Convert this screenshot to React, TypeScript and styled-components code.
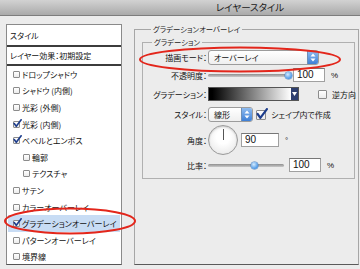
import React from "react";
import styled, { createGlobalStyle } from "styled-components";

const Global = createGlobalStyle`
  html, body { margin: 0; padding: 0; background: #ececec; }
  #root { width: 360px; height: 269px; }
`;

const JP = `"Noto Sans CJK JP", "Noto Sans", sans-serif`;
const NUM = `"Liberation Sans", Arial, sans-serif`;

const Window = styled.div`
  position: relative;
  width: 360px;
  height: 269px;
  overflow: hidden;
  background: #ececec;
  font-family: ${JP};
  font-feature-settings: "palt";
  color: #111;
  display: flex;
  flex-direction: column;
`;

const TitleBar = styled.div`
  height: 16px;
  flex: none;
  box-sizing: border-box;
  padding-left: 140px;
  background: linear-gradient(#d2d2d2, #aaaaaa);
  border-bottom: 1px solid #7d7d7d;
  font-size: 9.5px;
  line-height: 15px;
  text-align: center;
  color: #1a1a1a;
`;

const Body = styled.div`
  flex: 1;
  display: flex;
  align-items: stretch;
  padding: 8px 0 4px 6px;
  min-height: 0;
`;

const Sidebar = styled.div`
  width: 116px;
  flex: none;
  box-sizing: border-box;
  background: #fff;
  border: 1px solid #8a8a8a;
  border-bottom-color: #555;
  display: flex;
  flex-direction: column;
`;

const SideHeader = styled.div<{ $h: number }>`
  height: ${(p) => p.$h}px;
  flex: none;
  display: flex;
  align-items: center;
  padding-left: 3px;
  font-size: 8px;
  border-bottom: 2px solid #3c3c3c;
`;

const Item = styled.div<{ $indent?: boolean; $active?: boolean }>`
  height: 16.6px;
  flex: none;
  display: flex;
  align-items: center;
  gap: 2px;
  margin: 0 1px;
  padding-left: ${(p) => (p.$indent ? 15 : 5)}px;
  background: ${(p) => (p.$active ? "#c8dcf4" : "transparent")};
  font-size: 8px;
  white-space: nowrap;
`;

const Box = styled.span<{ $size: number }>`
  width: ${(p) => p.$size}px;
  height: ${(p) => p.$size}px;
  flex: none;
  position: relative;
  border: 1px solid #8c8c8c;
  background: linear-gradient(#ffffff, #ececec);
  border-radius: 1px;
  display: inline-block;
  svg {
    position: absolute;
    left: -1px;
    top: -3px;
  }
`;

const Check = ({ on, size = 5 }: { on?: boolean; size?: number }) => (
  <Box $size={size}>
    {on && (
      <svg width={size + 4} height={size + 4} viewBox="0 0 11 11">
        <path d="M1.5 5.5 L4 9 L10 1" fill="none" stroke="#1d3d8c" strokeWidth="2" strokeLinecap="round" strokeLinejoin="round" />
      </svg>
    )}
  </Box>
);

const Main = styled.div`
  flex: 1;
  display: flex;
  flex-direction: column;
  padding: 0 1px 0 12px;
  min-width: 0;
`;

const Outer = styled.fieldset`
  flex: 1;
  margin: 0;
  padding: 0 3px 0 7px;
  border: 1px solid #a6a6a6;
  border-bottom-color: #5a5a5a;
  min-width: 0;
`;

const Inner = styled.fieldset`
  margin: 3px 0 0 0;
  padding: 1px 4px 3px 0;
  border: 1px solid #b0b0b0;
  min-width: 0;
`;

const Legend = styled.legend`
  padding: 0 2px;
  margin-left: 9px;
  font-size: 7.4px;
  line-height: 10px;
  color: #1a1a1a;
`;

const Rows = styled.div`
  display: grid;
  grid-template-columns: 65px 1fr;
  grid-template-rows: 18px 18px 20px 21px 30px 20px;
  align-items: center;
`;

const Label = styled.div`
  font-size: 8px;
  text-align: right;
  white-space: nowrap;
  padding-right: 1px;
`;

const Line = styled.div`
  display: flex;
  align-items: center;
  gap: 3px;
`;

const Select = styled.div<{ $w: number }>`
  width: ${(p) => p.$w}px;
  height: 15px;
  box-sizing: border-box;
  border: 1px solid #9c9c9c;
  border-radius: 3px;
  background: linear-gradient(#ffffff, #efefef);
  display: flex;
  align-items: center;
  justify-content: space-between;
  padding-left: 5px;
  font-size: 8px;
  overflow: hidden;
`;

const Stepper = styled.span`
  width: 10px;
  height: 13px;
  flex: none;
  background: linear-gradient(#8fbcf0, #3d7fd6);
  border-left: 1px solid #6d8fb8;
  display: flex;
  align-items: center;
  justify-content: center;
`;

const Arrows = () => (
  <svg width="6" height="9" viewBox="0 0 6 9">
    <path d="M3 0.5 L5.5 3.5 H0.5 Z M3 8.5 L5.5 5.5 H0.5 Z" fill="#fff" />
  </svg>
);

const Track = styled.div<{ $w: number }>`
  position: relative;
  width: ${(p) => p.$w}px;
  height: 3px;
  border-radius: 2px;
  background: linear-gradient(#8f8f8f, #c9c9c9);
  margin-right: 2px;
`;

const Thumb = styled.span`
  position: absolute;
  top: -2px;
  width: 7px;
  height: 7px;
  margin-left: -3.5px;
  border-radius: 50%;
  background: radial-gradient(circle at 40% 35%, #d6ecff, #4b97e6 70%);
  box-shadow: 0 0 0 0.5px #4a7dbd;
`;

const Field = styled.div<{ $w: number }>`
  width: ${(p) => p.$w}px;
  height: 14px;
  box-sizing: border-box;
  background: #fff;
  border: 1px solid #a0a0a0;
  border-top-color: #777;
  font-family: ${NUM};
  font-size: 10px;
  line-height: 12px;
  padding-left: 3px;
`;

const Unit = styled.span`
  font-family: ${NUM};
  font-size: 8px;
  margin-left: 3px;
`;

const Swatch = styled.div`
  width: 91px;
  height: 14px;
  box-sizing: border-box;
  border: 1px solid #555;
  display: flex;
`;

const Ramp = styled.div`
  flex: 1;
  background: linear-gradient(to right, #000 4%, #fff 100%);
`;

const RampBtn = styled.span`
  width: 7px;
  background: #2e3f70;
  display: flex;
  align-items: center;
  justify-content: center;
`;

const Spacer = styled.span<{ $w: number }>`
  width: ${(p) => p.$w}px;
  flex: none;
`;

const Dial = styled.div`
  position: relative;
  width: 30px;
  height: 30px;
  box-sizing: border-box;
  border-radius: 50%;
  border: 1px solid #9a9a9a;
  background: radial-gradient(circle at 50% 40%, #ffffff 30%, #e2e2e2 100%);
  box-shadow: inset 0 1px 2px rgba(0, 0, 0, 0.2);
`;

const Needle = styled.span`
  position: absolute;
  left: 14px;
  top: 3px;
  width: 1px;
  height: 11px;
  background: #555;
`;

const Overlay = styled.svg`
  position: absolute;
  left: 0;
  top: 0;
  pointer-events: none;
`;

const CheckText = styled.span`
  font-size: 8px;
  margin-left: 2px;
  white-space: nowrap;
`;

const items: { t: string; on?: boolean; indent?: boolean; active?: boolean }[] = [
  { t: "ドロップシャドウ" },
  { t: "シャドウ (内側)" },
  { t: "光彩 (外側)" },
  { t: "光彩 (内側)", on: true },
  { t: "ベベルとエンボス", on: true },
  { t: "輪郭", indent: true },
  { t: "テクスチャ", indent: true },
  { t: "サテン" },
  { t: "カラーオーバーレイ" },
  { t: "グラデーションオーバーレイ", on: true, active: true },
  { t: "パターンオーバーレイ" },
  { t: "境界線" },
];

export default function App() {
  return (
    <Window>
      <Global />
      <TitleBar>レイヤースタイル</TitleBar>
      <Body>
        <Sidebar>
          <SideHeader $h={20}>スタイル</SideHeader>
          <SideHeader $h={17}>レイヤー効果：初期設定</SideHeader>
          {items.map((it) => (
            <Item key={it.t} $indent={it.indent} $active={it.active}>
              <Check on={it.on} />
              <span>{it.t}</span>
            </Item>
          ))}
        </Sidebar>
        <Main>
          <Outer>
            <Legend>グラデーションオーバーレイ</Legend>
            <Inner>
              <Legend>グラデーション</Legend>
              <Rows>
                <Label>描画モード：</Label>
                <Line>
                  <Select $w={111}>
                    オーバーレイ
                    <Stepper>
                      <Arrows />
                    </Stepper>
                  </Select>
                </Line>
                <Label>不透明度：</Label>
                <Line>
                  <Track $w={80}>
                    <Thumb style={{ left: "100%" }} />
                  </Track>
                  <Field $w={32}>100</Field>
                  <Unit>%</Unit>
                </Line>
                <Label>グラデーション：</Label>
                <Line>
                  <Swatch>
                    <Ramp />
                    <RampBtn>
                      <svg width="5" height="4" viewBox="0 0 5 4">
                        <path d="M0 0 H5 L2.5 4 Z" fill="#fff" />
                      </svg>
                    </RampBtn>
                  </Swatch>
                  <Spacer $w={13} />
                  <Check size={7} />
                  <CheckText>逆方向</CheckText>
                </Line>
                <Label>スタイル：</Label>
                <Line>
                  <Select $w={45}>
                    線形
                    <Stepper>
                      <Arrows />
                    </Stepper>
                  </Select>
                  <Check on size={8} />
                  <CheckText>シェイプ内で作成</CheckText>
                </Line>
                <Label>角度：</Label>
                <Line>
                  <Dial>
                    <Needle />
                  </Dial>
                  <Field $w={38}>90</Field>
                  <Unit>°</Unit>
                </Line>
                <Label>比率：</Label>
                <Line>
                  <Track $w={76}>
                    <Thumb style={{ left: "61%" }} />
                  </Track>
                  <Field $w={32}>100</Field>
                  <Unit>%</Unit>
                </Line>
              </Rows>
            </Inner>
          </Outer>
        </Main>
      </Body>
      <Overlay width="360" height="269" viewBox="0 0 360 269">
        <ellipse cx="70" cy="221" rx="65" ry="12.5" fill="none" stroke="#e3261b" strokeWidth="2" />
        <ellipse cx="240" cy="59.5" rx="100" ry="12" fill="none" stroke="#e3261b" strokeWidth="2" />
      </Overlay>
    </Window>
  );
}
